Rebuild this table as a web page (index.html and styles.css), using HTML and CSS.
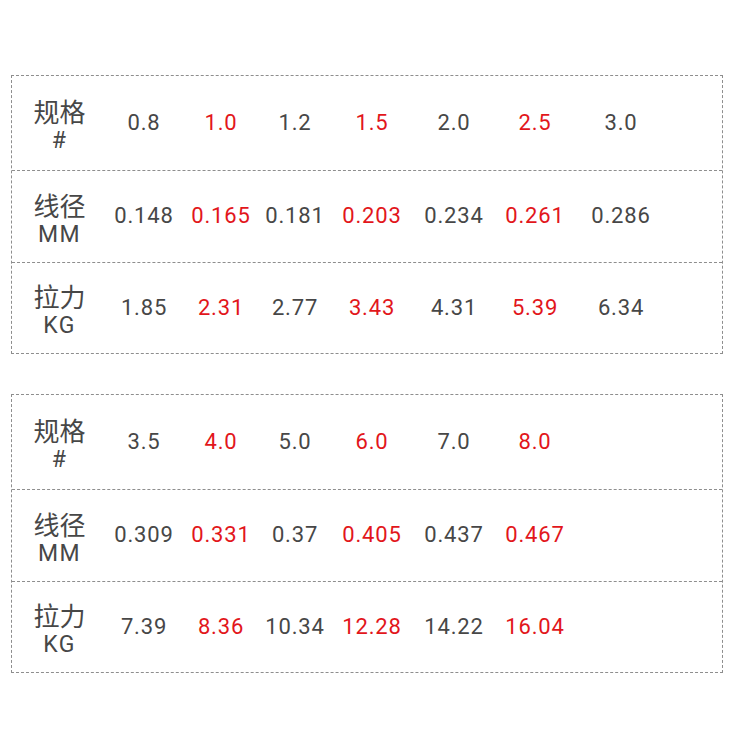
FILE: index.html
```html
<!DOCTYPE html>
<html lang="zh">
<head>
<meta charset="utf-8">
<link rel="stylesheet" href="styles.css">
</head>
<body>
<div class="page">
  <div class="table">
    <div class="row r1">
      <div class="label"><span class="cn">规格</span><span class="en">#</span></div>
      <div class="c">0.8</div><div class="c red">1.0</div><div class="c">1.2</div><div class="c red">1.5</div><div class="c">2.0</div><div class="c red">2.5</div><div class="c">3.0</div>
    </div>
    <div class="row r2">
      <div class="label"><span class="cn">线径</span><span class="en">MM</span></div>
      <div class="c">0.148</div><div class="c red">0.165</div><div class="c">0.181</div><div class="c red">0.203</div><div class="c">0.234</div><div class="c red">0.261</div><div class="c">0.286</div>
    </div>
    <div class="row r3">
      <div class="label"><span class="cn">拉力</span><span class="en">KG</span></div>
      <div class="c">1.85</div><div class="c red">2.31</div><div class="c">2.77</div><div class="c red">3.43</div><div class="c">4.31</div><div class="c red">5.39</div><div class="c">6.34</div>
    </div>
  </div>
  <div class="table">
    <div class="row r1">
      <div class="label"><span class="cn">规格</span><span class="en">#</span></div>
      <div class="c">3.5</div><div class="c red">4.0</div><div class="c">5.0</div><div class="c red">6.0</div><div class="c">7.0</div><div class="c red">8.0</div>
    </div>
    <div class="row r2">
      <div class="label"><span class="cn">线径</span><span class="en">MM</span></div>
      <div class="c">0.309</div><div class="c red">0.331</div><div class="c">0.37</div><div class="c red">0.405</div><div class="c">0.437</div><div class="c red">0.467</div>
    </div>
    <div class="row r3">
      <div class="label"><span class="cn">拉力</span><span class="en">KG</span></div>
      <div class="c">7.39</div><div class="c red">8.36</div><div class="c">10.34</div><div class="c red">12.28</div><div class="c">14.22</div><div class="c red">16.04</div>
    </div>
  </div>
</div>
</body>
</html>
```
FILE: styles.css
```css
html, body {
  margin: 0;
  padding: 0;
  background: #fff;
}
.page {
  padding: 75px 0 0 11px;
  display: flex;
  flex-direction: column;
  gap: 40px;
}
.table {
  width: 710px;
  border: 1px dashed #8e8e8e;
  font-family: Roboto, "Noto Sans CJK SC", sans-serif;
  color: #474747;
}
.row {
  display: grid;
  grid-template-columns: 95px 74px 80px 68px 86px 78px 84px 88px 1fr;
  align-items: center;
  border-bottom: 1px dashed #8e8e8e;
}
.row:last-child {
  border-bottom: none;
}
.r1 { height: 94px; }
.r2 { height: 91px; }
.r3 { height: 90px; }
.label {
  display: flex;
  flex-direction: column;
  align-items: center;
  line-height: 30px;
  padding-top: 6px;
}
.cn {
  font-family: "Noto Sans CJK SC", sans-serif;
  font-size: 26px;
}
.en {
  font-family: Roboto, sans-serif;
  font-size: 23px;
  letter-spacing: 1.5px;
}
.c {
  text-align: center;
  font-size: 22px;
  letter-spacing: 0.8px;
  padding-bottom: 2px;
}
.red {
  color: #e2161b;
}
```
